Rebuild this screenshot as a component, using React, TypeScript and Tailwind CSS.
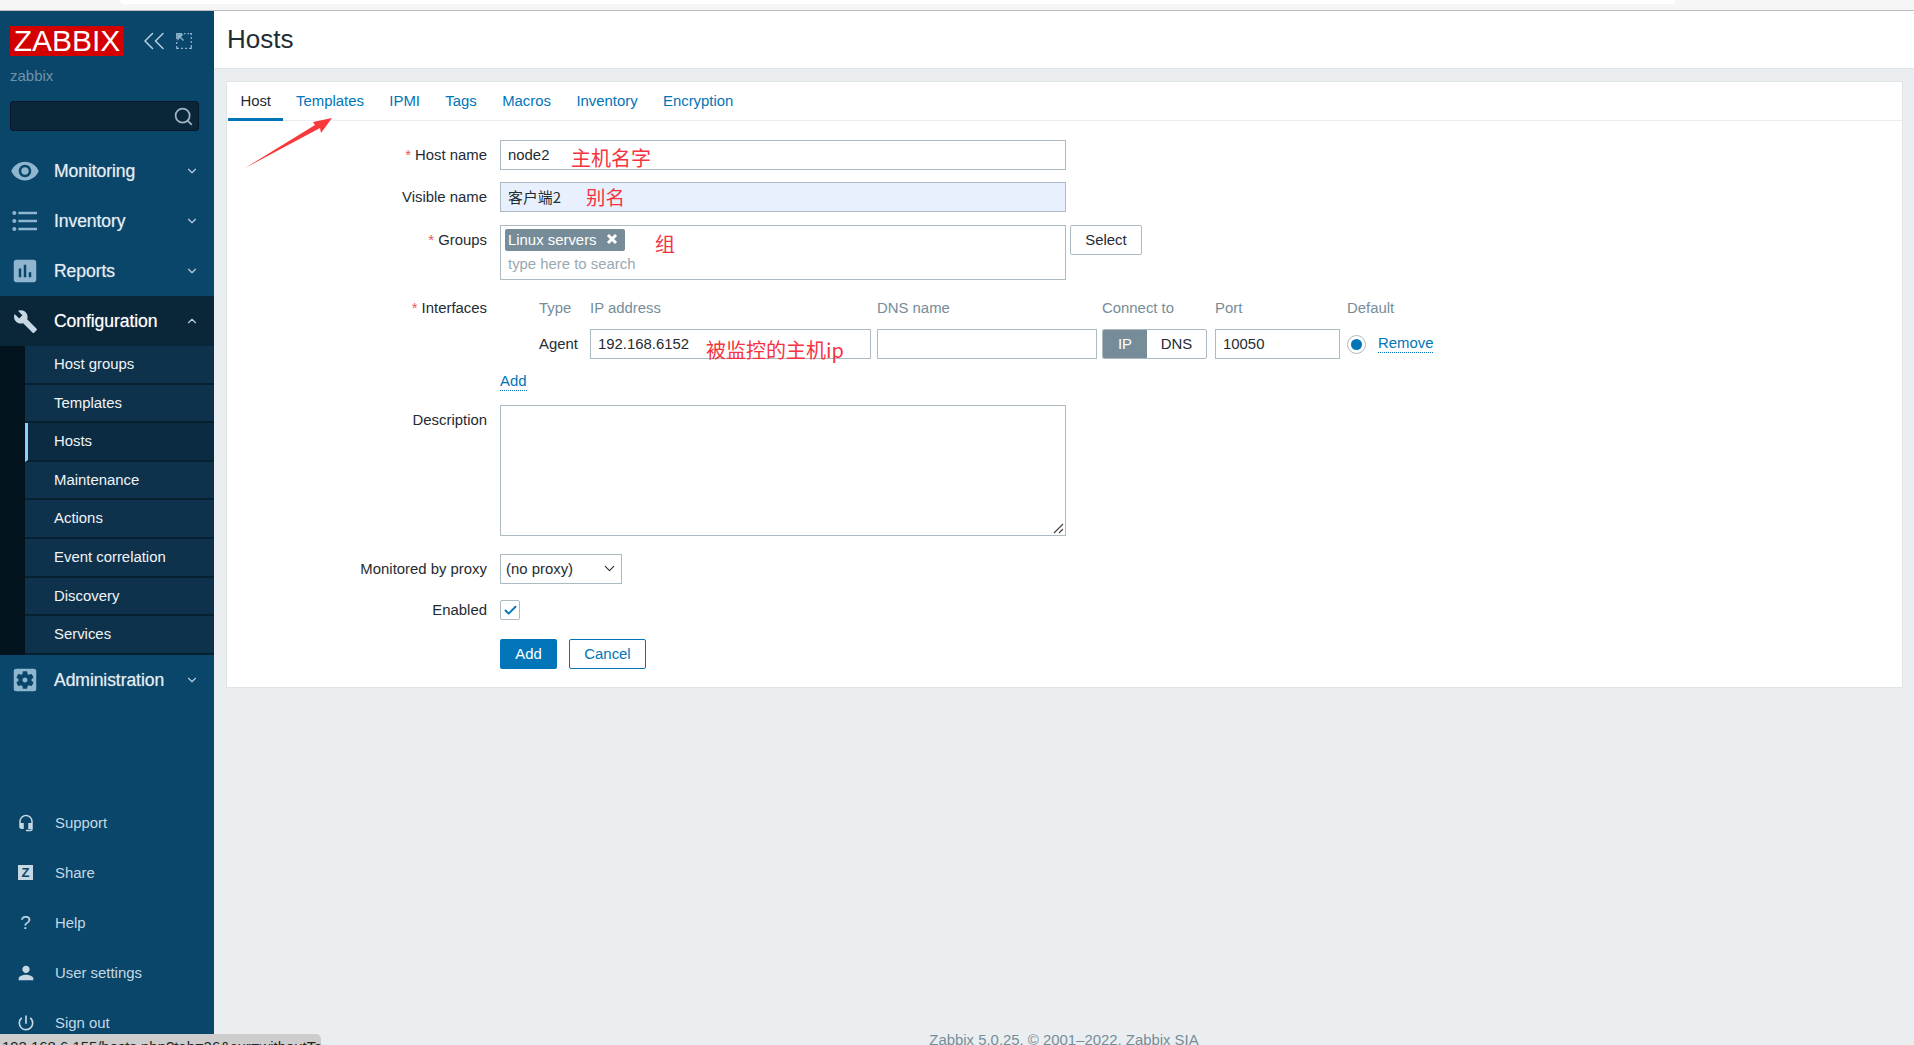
import type { ReactNode } from "react";
import { Check, ChevronDown, ChevronUp, ChevronsLeft, Search } from "lucide-react";
import {
  MdAssessment,
  MdBuild,
  MdFormatListBulleted,
  MdHeadsetMic,
  MdPerson,
  MdPowerSettingsNew,
  MdSettingsApplications,
  MdVisibility,
} from "react-icons/md";

const subItems = [
  "Host groups",
  "Templates",
  "Hosts",
  "Maintenance",
  "Actions",
  "Event correlation",
  "Discovery",
  "Services",
];

const tabs = ["Host", "Templates", "IPMI", "Tags", "Macros", "Inventory", "Encryption"];

const noteClass =
  "absolute whitespace-nowrap font-['Noto_Sans_CJK_SC','Liberation_Sans',sans-serif] text-[#f5333f] leading-none";

function MenuItem({ icon, label, open }: { icon: ReactNode; label: string; open?: boolean }) {
  return (
    <div className={`flex h-[50px] shrink-0 items-center ${open ? "bg-[#0a2639] text-white" : "text-[#e4edf3]"}`}>
      <div className="flex w-[54px] justify-center pr-[4px] text-[#8fb5cf]">{icon}</div>
      <span className="text-[17.6px] tracking-[-0.1px] [text-shadow:0_0_1px_rgba(255,255,255,0.5)]">{label}</span>
      <span className="ml-auto mr-[15px] text-[#b9cfde]">
        {open ? <ChevronUp size={14} strokeWidth={2} /> : <ChevronDown size={14} strokeWidth={2} />}
      </span>
    </div>
  );
}

function BottomItem({ icon, label }: { icon: ReactNode; label: string }) {
  return (
    <div className="flex h-[50px] shrink-0 items-center text-[#c5d8e4]">
      <div className="flex w-[51px] justify-center">{icon}</div>
      <span className="ml-[4px]">{label}</span>
    </div>
  );
}

function Sidebar() {
  return (
    <aside className="flex h-full w-[214px] shrink-0 flex-col overflow-hidden bg-[#0a466a]">
      <div className="mt-[15px] flex h-[30px] shrink-0 items-center pl-[10px]">
        <div className="flex h-[30px] w-[114px] items-center justify-center bg-[#d40000] text-[30px] leading-none text-white">
          ZABBIX
        </div>
        <ChevronsLeft size={36} strokeWidth={1} className="ml-[12px] text-[#b9cfde]" />
        <svg width="16" height="16" viewBox="0 0 16 16" fill="none" className="ml-[4px] text-[#8fb5cf]">
          <path d="M8 .7h1.5M11.5.7h1.5M14 .7h1.3V2M15.3 4v2M15.3 8v2M15.3 12v3.3H13M11 15.3H9M7 15.3H5M3 15.3H.7V13M.7 11V9" stroke="currentColor" strokeWidth="1.2" />
          <path d="M.7 6V.7H6" stroke="currentColor" strokeWidth="1.2" />
          <path d="M2 2l5.5 5.5M2 2h4L2 6z" stroke="currentColor" strokeWidth="1.4" fill="currentColor" />
        </svg>
      </div>
      <div className="mt-[10px] flex h-[20px] shrink-0 items-center pl-[10px] text-[15px] text-[#6f93ab]">zabbix</div>
      <div className="mx-[10px] mt-[15px] flex h-[30px] w-[189px] shrink-0 items-center justify-end rounded-[3px] border border-[#04182a] bg-[#0a2639] pr-[4px] text-[#9fb4c2]">
        <Search size={21} strokeWidth={2} />
      </div>
      <nav className="mt-[15px] flex shrink-0 flex-col">
        <MenuItem icon={<MdVisibility size={30} />} label="Monitoring" />
        <MenuItem icon={<MdFormatListBulleted size={32} />} label="Inventory" />
        <MenuItem icon={<MdAssessment size={30} />} label="Reports" />
        <MenuItem icon={<MdBuild size={25} className="text-[#c5d8e4]" />} label="Configuration" open />
        <div className="bg-[#03131d] pl-[25px]">
          {subItems.map((item) => (
            <div
              key={item}
              className={`flex h-[38.6px] items-center border-b-[2px] border-[#07202f] text-[#f0f4f7] ${
                item === "Hosts" ? "border-l-[3px] border-l-[#8ad0ff] bg-[#0a2b42] pl-[26px]" : "bg-[#0f324c] pl-[29px]"
              }`}
            >
              {item}
            </div>
          ))}
        </div>
        <MenuItem icon={<MdSettingsApplications size={30} />} label="Administration" />
      </nav>
      <div className="mt-[93px] flex shrink-0 flex-col">
        <BottomItem icon={<MdHeadsetMic size={18} />} label="Support" />
        <BottomItem
          icon={
            <span className="flex h-[15px] w-[15px] items-center justify-center bg-[#c5d8e4] text-[13px] font-bold text-[#0a466a]">
              Z
            </span>
          }
          label="Share"
        />
        <BottomItem icon={<span className="text-[19px] leading-none">?</span>} label="Help" />
        <BottomItem icon={<MdPerson size={22} />} label="User settings" />
        <BottomItem icon={<MdPowerSettingsNew size={20} />} label="Sign out" />
      </div>
    </aside>
  );
}

function Row({ label, required, className, children }: { label?: string; required?: boolean; className?: string; children: ReactNode }) {
  return (
    <div className={`flex items-start gap-[13px] ${className ?? ""}`}>
      <div className="flex h-[30px] w-[260px] shrink-0 items-center justify-end pt-[1px]">
        {required && <span className="mr-[4px] text-[#e45959]">*</span>}
        {label}
      </div>
      {children}
    </div>
  );
}

function Field({ width, className, children }: { width: string; className?: string; children?: ReactNode }) {
  return (
    <div className={`relative flex h-[30px] items-center border border-[#acbbc2] pt-[1px] ${width} ${className ?? "pl-[7px]"}`}>
      {children}
    </div>
  );
}

function InterfacesGrid() {
  return (
    <div className="ml-[39px] grid grid-cols-[51px_287px_225px_113px_132px_auto] items-center">
      {["Type", "IP address", "DNS name", "Connect to", "Port", "Default"].map((head) => (
        <div key={head} className="mb-[11px] flex h-[20px] items-center text-[#768d99]">
          {head}
        </div>
      ))}
      <div>Agent</div>
      <Field width="w-[281px]">
        192.168.6152
        <span className={`${noteClass} left-[115px] top-[10px] text-[20px]`}>被监控的主机ip</span>
      </Field>
      <Field width="w-[220px]" />
      <div className="flex h-[30px] w-[105px] overflow-hidden rounded-[2px] border border-[#acbbc2]">
        <div className="flex w-[44px] items-center justify-center bg-[#768d99] text-white">IP</div>
        <div className="flex flex-1 items-center justify-center">DNS</div>
      </div>
      <Field width="w-[125px]">10050</Field>
      <div className="flex items-center">
        <span className="flex h-[19px] w-[19px] items-center justify-center rounded-full border border-[#acbbc2]">
          <span className="h-[11px] w-[11px] rounded-full bg-[#0275b8]" />
        </span>
        <span className="ml-[12px] border-b border-dotted border-[#0275b8] leading-[17px] text-[#0275b8]">Remove</span>
      </div>
    </div>
  );
}

function HostForm() {
  return (
    <section className="ml-[12px] mr-[11px] mt-[12px] border border-[#dfe4e7] bg-white">
      <div className="flex h-[39px] border-b border-[#ebeef0] pl-[1px]">
        {tabs.map((tab, index) => (
          <div
            key={tab}
            className={`flex h-[39px] items-center ${
              index === 0 ? "border-b-[3px] border-[#0275b8] px-[12.4px] pt-[3px]" : "px-[12.7px] text-[#0275b8]"
            }`}
          >
            {tab}
          </div>
        ))}
      </div>

      <div className="flex flex-col pb-[18px]">
        <Row label="Host name" required className="mt-[19px]">
          <Field width="w-[566px]">
            node2
            <span className={`${noteClass} left-[70px] top-[7px] text-[20px]`}>主机名字</span>
          </Field>
        </Row>
        <Row label="Visible name" className="mt-[12px]">
          <Field width="w-[566px]" className="bg-[#e8f0fe] pl-[7px]">
            <span className="font-['Noto_Sans_CJK_SC','Liberation_Sans',sans-serif]">客户端2</span>
            <span className={`${noteClass} left-[85px] top-[4px] text-[19.5px]`}>别名</span>
          </Field>
        </Row>
        <Row label="Groups" required className="mt-[13px]">
          <div className="relative h-[55px] w-[566px] border border-[#acbbc2] pl-[4px] pt-[3px]">
            <div className="flex h-[22px] w-[120px] items-center rounded-[2px] bg-[#768d99] pl-[3px] text-white">
              Linux servers
              <svg width="12" height="12" viewBox="0 0 12 12" className="ml-[9px] mt-[-2px]">
                <path d="M2 2l8 8M10 2l-8 8" stroke="white" strokeWidth="3" />
              </svg>
            </div>
            <div className="mt-[3px] pl-[3px] leading-[20px] text-[#9aa9b1]">type here to search</div>
            <span className={`${noteClass} left-[154px] top-[8px] text-[20px]`}>组</span>
          </div>
          <div className="ml-[-9px] flex h-[30px] w-[72px] items-center justify-center rounded-[2px] border border-[#acbbc2]">Select</div>
        </Row>
        <div className="mt-[18px] flex items-start gap-[13px]">
          <div className="flex h-[20px] w-[260px] shrink-0 items-center justify-end">
            <span className="mr-[4px] text-[#e45959]">*</span>
            Interfaces
          </div>
          <InterfacesGrid />
        </div>
        <div className="ml-[273px] mt-[13px] flex h-[20px] items-center">
          <span className="border-b border-dotted border-[#0275b8] leading-[17px] text-[#0275b8]">Add</span>
        </div>
        <div className="mt-[13px] flex items-start gap-[13px]">
          <div className="flex h-[30px] w-[260px] shrink-0 items-center justify-end pt-[1px]">Description</div>
          <div className="relative h-[131px] w-[566px] border border-[#acbbc2]">
            <svg width="12" height="12" viewBox="0 0 12 12" className="absolute bottom-[1px] right-[1px] text-[#444]">
              <path d="M11 2L2 11M11 7l-4 4" stroke="currentColor" strokeWidth="1.2" />
            </svg>
          </div>
        </div>
        <Row label="Monitored by proxy" className="mt-[18px]">
          <Field width="w-[122px]" className="pl-[5px]">
            (no proxy)
            <ChevronDown size={17} strokeWidth={1.5} className="absolute right-[3px] top-[5px] text-[#1f2c33]" />
          </Field>
        </Row>
        <div className="mt-[16px] flex h-[20px] items-center gap-[13px]">
          <div className="w-[260px] shrink-0 text-right">Enabled</div>
          <div className="flex h-[20px] w-[20px] items-center justify-center rounded-[2px] border border-[#acbbc2] text-[#0275b8]">
            <Check size={15} strokeWidth={3} />
          </div>
        </div>
        <div className="ml-[273px] mt-[19px] flex gap-[12px]">
          <div className="flex h-[30px] w-[57px] items-center justify-center rounded-[2px] bg-[#0275b8] text-white">Add</div>
          <div className="flex h-[30px] w-[77px] items-center justify-center rounded-[2px] border border-[#0275b8] text-[#0275b8]">Cancel</div>
        </div>
      </div>
    </section>
  );
}

export default function App() {
  return (
    <div className="relative flex h-[1045px] w-[1914px] flex-col overflow-hidden bg-[#ebeef0] font-['Liberation_Sans',Arial,sans-serif] text-[14.9px] text-[#1f2c33]">
      <div className="h-[11px] shrink-0 border-b border-[#bdbdbd] bg-[#f6f6f6]">
        <div className="ml-[120px] h-[4px] w-[1555px] rounded-b-[6px] bg-white" />
      </div>
      <div className="flex min-h-0 flex-1">
        <Sidebar />
        <main className="flex min-w-0 flex-1 flex-col">
          <header className="flex h-[58px] shrink-0 items-center border-b border-[#dfe4e7] bg-white pl-[13px] text-[26px]">
            Hosts
          </header>
          <HostForm />
          <footer className="mb-[-4px] mt-auto h-[17px] text-center leading-[17px] text-[#768d99]">
            Zabbix 5.0.25. © 2001–2022, Zabbix SIA
          </footer>
        </main>
      </div>

      <svg width="100" height="60" viewBox="0 0 100 60" className="absolute left-[240px] top-[112px]">
        <path d="M5 56L75 13L73 10L92 6L81 21L80 16Z" fill="#f8383a" />
      </svg>

      <div className="absolute bottom-0 left-0 h-[11px] w-[321px] overflow-hidden whitespace-nowrap rounded-tr-[5px] bg-[#cdcdcd] pl-[2px] pt-[5px] leading-[17px] text-[#222]">
        192.168.6.155/hosts.php?tab=36&amp;cur=withoutTab
      </div>
    </div>
  );
}
